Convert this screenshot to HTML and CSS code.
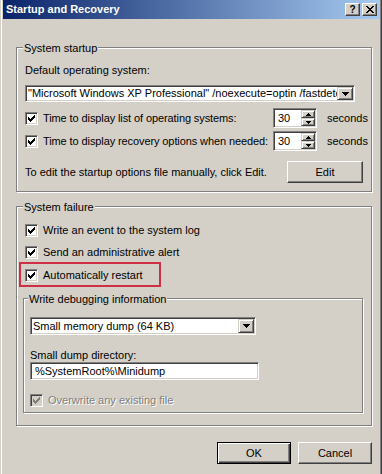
FILE: index.html
```html
<!DOCTYPE html>
<html lang="en">
<head>
    <meta charset="UTF-8">
    <meta name="viewport" content="width=device-width, initial-scale=1.0">
    <title>Startup and Recovery</title>
    <link rel="stylesheet" href="styles.css">
</head>
<body>
    <div class="window">
        <div class="titlebar">
            <span class="title">Startup and Recovery</span>
            <div class="caption-buttons">
                <span class="caption-btn help">?</span>
                <span class="caption-btn close">
                    <svg width="8" height="7" viewBox="0 0 8 7" shape-rendering="crispEdges"><path d="M0 0h2v1h-2z M6 0h2v1h-2z M1 1h2v1h-2z M5 1h2v1h-2z M2 2h4v1h-4z M3 3h2v1h-2z M2 4h4v1h-4z M1 5h2v1h-2z M5 5h2v1h-2z M0 6h2v1h-2z M6 6h2v1h-2z"/></svg>
                </span>
            </div>
        </div>

        <div class="content">
            <div class="group startup">
                <div class="group-title">System startup</div>
                <div class="label os-label">Default operating system:</div>
                <div class="combo os-combo">
                    <span class="combo-text">"Microsoft Windows XP Professional" /noexecute=optin /fastdetect</span>
                    <span class="drop-btn">
                        <svg width="7" height="4" viewBox="0 0 7 4" shape-rendering="crispEdges"><path d="M0 0h7v1h-1v1h-1v1h-1v1h-1v-1h-1v-1h-1v-1h-1z"/></svg>
                    </span>
                </div>
                <div class="timer-row first-timer">
                    <span class="checkbox">
                        <svg width="7" height="7" viewBox="0 0 7 7" shape-rendering="crispEdges"><path d="M6 0h1v1h-1z M5 1h2v1h-2z M0 2h1v1h-1z M4 2h3v1h-3z M0 3h2v1h-2z M3 3h3v1h-3z M0 4h5v1h-5z M1 5h3v1h-3z M2 6h1v1h-1z"/></svg>
                    </span>
                    <span class="timer-label">Time to display list of operating systems:</span>
                    <div class="spinner">
                        <span class="spin-value">30</span>
                        <span class="spin-btns">
                            <span class="spin-btn"><svg width="5" height="3" viewBox="0 0 5 3" shape-rendering="crispEdges"><path d="M2 0h1v1h1v1h1v1h-5v-1h1v-1h1z"/></svg></span>
                            <span class="spin-btn"><svg width="5" height="3" viewBox="0 0 5 3" shape-rendering="crispEdges"><path d="M0 0h5v1h-1v1h-1v1h-1v-1h-1v-1h-1z"/></svg></span>
                        </span>
                    </div>
                    <span class="unit">seconds</span>
                </div>
                <div class="timer-row second-timer">
                    <span class="checkbox">
                        <svg width="7" height="7" viewBox="0 0 7 7" shape-rendering="crispEdges"><path d="M6 0h1v1h-1z M5 1h2v1h-2z M0 2h1v1h-1z M4 2h3v1h-3z M0 3h2v1h-2z M3 3h3v1h-3z M0 4h5v1h-5z M1 5h3v1h-3z M2 6h1v1h-1z"/></svg>
                    </span>
                    <span class="timer-label">Time to display recovery options when needed:</span>
                    <div class="spinner">
                        <span class="spin-value">30</span>
                        <span class="spin-btns">
                            <span class="spin-btn"><svg width="5" height="3" viewBox="0 0 5 3" shape-rendering="crispEdges"><path d="M2 0h1v1h1v1h1v1h-5v-1h1v-1h1z"/></svg></span>
                            <span class="spin-btn"><svg width="5" height="3" viewBox="0 0 5 3" shape-rendering="crispEdges"><path d="M0 0h5v1h-1v1h-1v1h-1v-1h-1v-1h-1z"/></svg></span>
                        </span>
                    </div>
                    <span class="unit">seconds</span>
                </div>
                <div class="edit-row">
                    <span>To edit the startup options file manually, click Edit.</span>
                    <span class="button edit-btn">Edit</span>
                </div>
            </div>

            <div class="group failure">
                <div class="group-title">System failure</div>
                <div class="check-row log-row">
                    <span class="checkbox">
                        <svg width="7" height="7" viewBox="0 0 7 7" shape-rendering="crispEdges"><path d="M6 0h1v1h-1z M5 1h2v1h-2z M0 2h1v1h-1z M4 2h3v1h-3z M0 3h2v1h-2z M3 3h3v1h-3z M0 4h5v1h-5z M1 5h3v1h-3z M2 6h1v1h-1z"/></svg>
                    </span>
                    <span>Write an event to the system log</span>
                </div>
                <div class="check-row alert-row">
                    <span class="checkbox">
                        <svg width="7" height="7" viewBox="0 0 7 7" shape-rendering="crispEdges"><path d="M6 0h1v1h-1z M5 1h2v1h-2z M0 2h1v1h-1z M4 2h3v1h-3z M0 3h2v1h-2z M3 3h3v1h-3z M0 4h5v1h-5z M1 5h3v1h-3z M2 6h1v1h-1z"/></svg>
                    </span>
                    <span>Send an administrative alert</span>
                </div>
                <div class="highlight">
                    <div class="check-row">
                        <span class="checkbox">
                            <svg width="7" height="7" viewBox="0 0 7 7" shape-rendering="crispEdges"><path d="M6 0h1v1h-1z M5 1h2v1h-2z M0 2h1v1h-1z M4 2h3v1h-3z M0 3h2v1h-2z M3 3h3v1h-3z M0 4h5v1h-5z M1 5h3v1h-3z M2 6h1v1h-1z"/></svg>
                        </span>
                        <span>Automatically restart</span>
                    </div>
                </div>

                <div class="group debug">
                    <div class="group-title">Write debugging information</div>
                    <div class="combo dump-combo">
                        <span class="combo-text">Small memory dump (64 KB)</span>
                        <span class="drop-btn">
                            <svg width="7" height="4" viewBox="0 0 7 4" shape-rendering="crispEdges"><path d="M0 0h7v1h-1v1h-1v1h-1v1h-1v-1h-1v-1h-1v-1h-1z"/></svg>
                        </span>
                    </div>
                    <div class="label dir-label">Small dump directory:</div>
                    <div class="textbox">%SystemRoot%\Minidump</div>
                    <div class="check-row overwrite-row disabled">
                        <span class="checkbox">
                            <svg width="7" height="7" viewBox="0 0 7 7" shape-rendering="crispEdges"><path d="M6 0h1v1h-1z M5 1h2v1h-2z M0 2h1v1h-1z M4 2h3v1h-3z M0 3h2v1h-2z M3 3h3v1h-3z M0 4h5v1h-5z M1 5h3v1h-3z M2 6h1v1h-1z"/></svg>
                        </span>
                        <span>Overwrite any existing file</span>
                    </div>
                </div>
            </div>

            <div class="actions">
                <span class="button default">OK</span>
                <span class="button">Cancel</span>
            </div>
        </div>
    </div>
</body>
</html>
```

FILE: styles.css
```css
* {
    box-sizing: border-box;
}

body {
    margin: 0;
    background-color: #d4d0c8;
    font-family: "Liberation Sans", Arial, sans-serif;
    font-size: 11px;
    line-height: 13px;
    color: #000;
}

.window {
    width: 382px;
    height: 474px;
    padding: 0 2px 0 3px;
    box-shadow: inset 1px 0 0 #d4d0c8, inset 2px 0 0 #fff, inset -1px 0 0 #404040, inset -2px 0 0 #808080;
}

/* title bar */
.titlebar {
    height: 19px;
    display: flex;
    align-items: center;
    padding: 0 3px 0 3px;
    background: linear-gradient(to right, #0a246a, #a6caf0);
    color: #fff;
    font-weight: bold;
}

.caption-buttons {
    margin-left: auto;
    display: flex;
    gap: 2px;
}

.caption-btn {
    width: 15px;
    height: 13px;
    display: flex;
    align-items: center;
    justify-content: center;
    background-color: #d4d0c8;
    border: 1px solid;
    border-color: #fff #404040 #404040 #fff;
    box-shadow: inset -1px -1px 0 #808080;
    color: #000;
    font-size: 10px;
    line-height: 10px;
}

/* group boxes */
.content {
    padding-left: 13px;
}

.group {
    width: 356px;
    display: flex;
    flex-direction: column;
    border: 1px solid #808080;
    box-shadow: inset 1px 1px 0 #fff, 1px 1px 0 #fff;
    padding: 0 8px 8px 8px;
}

.group-title {
    align-self: flex-start;
    margin: -6px 0 0 -2px;
    padding: 0 1px;
    background-color: #d4d0c8;
}

.startup {
    margin-top: 28px;
}

.failure {
    margin-top: 14px;
    padding-bottom: 12px;
}

.debug {
    width: 340px;
    margin: 11px 0 0 -2px;
    padding: 0 6px 4px 6px;
}

.os-label {
    margin-top: 9px;
}

/* sunken fields */
.combo,
.textbox,
.spinner {
    display: flex;
    align-items: center;
    background-color: #fff;
    border: 1px solid;
    border-color: #808080 #fff #fff #808080;
    box-shadow: inset 1px 1px 0 #404040, inset -1px -1px 0 #d4d0c8;
    padding: 1px;
}

.combo-text {
    flex: 1;
    overflow: hidden;
    white-space: nowrap;
    padding-left: 1px;
}

.drop-btn {
    width: 16px;
    align-self: stretch;
    display: flex;
    align-items: center;
    justify-content: center;
    background-color: #d4d0c8;
    border: 1px solid;
    border-color: #d4d0c8 #404040 #404040 #d4d0c8;
    box-shadow: inset 1px 1px 0 #fff, inset -1px -1px 0 #808080;
}

.os-combo {
    width: 330px;
    height: 17px;
    margin-top: 8px;
}

.dump-combo {
    width: 226px;
    height: 18px;
    margin-top: 11px;
}

.dir-label {
    margin-top: 14px;
}

.textbox {
    width: 229px;
    height: 18px;
    padding-left: 4px;
}

/* checkboxes */
.checkbox {
    width: 13px;
    height: 13px;
    flex: none;
    display: flex;
    align-items: center;
    justify-content: center;
    background-color: #fff;
    border: 1px solid;
    border-color: #808080 #fff #fff #808080;
    box-shadow: inset 1px 1px 0 #404040, inset -1px -1px 0 #d4d0c8;
}

.check-row {
    height: 16px;
    display: flex;
    align-items: center;
    gap: 5px;
}

.log-row {
    margin-top: 8px;
}

.alert-row {
    margin-top: 6px;
}

.highlight {
    width: 142px;
    margin: 2px 0 0 -6px;
    padding: 3px 0 2px 4px;
    border: 2px solid #cf2f45;
}

.overwrite-row {
    margin-top: 12px;
}

.disabled {
    color: #808080;
    text-shadow: 1px 1px 0 #fff;
}

.disabled .checkbox {
    background-color: #d4d0c8;
}

.disabled svg {
    fill: #808080;
}

/* timers */
.timer-row {
    height: 20px;
    display: flex;
    align-items: center;
}

.first-timer {
    margin-top: 6px;
}

.second-timer {
    margin-top: 3px;
}

.timer-label {
    width: 235px;
    flex: none;
    padding-left: 5px;
    letter-spacing: -0.1px;
}

.spinner {
    width: 44px;
    height: 20px;
    flex: none;
    padding: 1px;
}

.spin-value {
    flex: 1;
    padding-left: 3px;
}

.spin-btns {
    width: 14px;
    align-self: stretch;
    display: flex;
    flex-direction: column;
}

.spin-btn {
    flex: 1;
    display: flex;
    align-items: center;
    justify-content: center;
    background-color: #d4d0c8;
    border: 1px solid;
    border-color: #d4d0c8 #404040 #404040 #d4d0c8;
    box-shadow: inset 1px 1px 0 #fff, inset -1px -1px 0 #808080;
}

.unit {
    flex: none;
    margin-left: 10px;
}

/* buttons */
.edit-row {
    height: 22px;
    margin-top: 10px;
    display: flex;
    align-items: center;
}

.button {
    width: 74px;
    height: 22px;
    display: flex;
    align-items: center;
    justify-content: center;
    background-color: #d4d0c8;
    border: 1px solid;
    border-color: #fff #404040 #404040 #fff;
    box-shadow: inset -1px -1px 0 #808080;
}

.edit-btn {
    width: 76px;
    margin-left: auto;
}

.button.default {
    border-color: #000;
    box-shadow: inset 1px 1px 0 #fff, inset -1px -1px 0 #404040, inset -2px -2px 0 #808080;
}

.actions {
    display: flex;
    justify-content: flex-end;
    gap: 7px;
    margin-top: 16px;
    padding-right: 8px;
}
```
